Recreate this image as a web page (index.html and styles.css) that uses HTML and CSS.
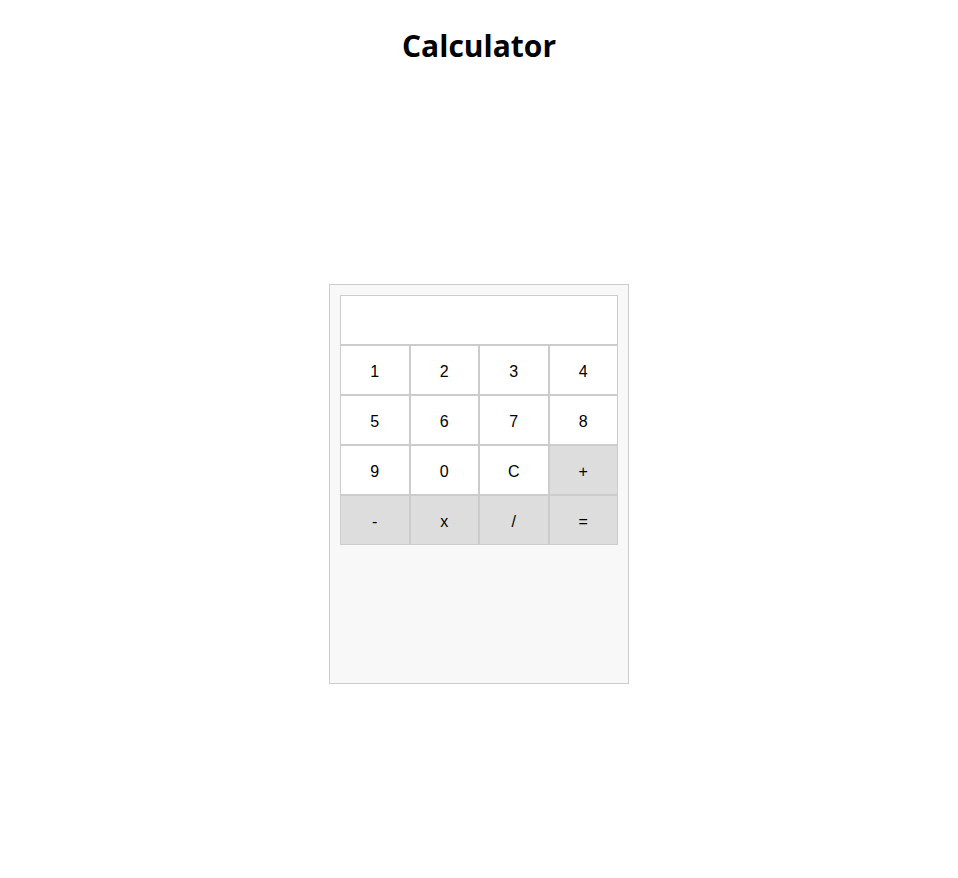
FILE: index.html
```html
<!DOCTYPE html>
<html>
<head>
<meta charset="utf-8">
<title>Calculator</title>
<link rel="stylesheet" href="styles.css">
</head>
<body>
<h1 class="title">Calculator</h1>
<div class="calculator">
  <input class="display" type="text" readonly>
  <div class="keys">
    <button class="key">1</button>
    <button class="key">2</button>
    <button class="key">3</button>
    <button class="key">4</button>
    <button class="key">5</button>
    <button class="key">6</button>
    <button class="key">7</button>
    <button class="key">8</button>
    <button class="key">9</button>
    <button class="key">0</button>
    <button class="key">C</button>
    <button class="key op">+</button>
    <button class="key op">-</button>
    <button class="key op">x</button>
    <button class="key op">/</button>
    <button class="key op">=</button>
  </div>
</div>
</body>
</html>
```
FILE: styles.css
```css
html, body {
  margin: 0;
  padding: 0;
  background: #fff;
}
body {
  padding: 8px;
  font-family: "Open Sans", "Noto Sans", sans-serif;
}
.title {
  text-align: center;
  font-size: 30px;
  font-weight: 700;
  margin: 14px 0 0;
  line-height: 48px;
  color: #000;
}
.calculator {
  box-sizing: border-box;
  width: 300px;
  height: 400px;
  margin: 214px auto 0;
  padding: 10px;
  background: #f8f8f8;
  border: 1px solid #ccc;
}
.display {
  display: block;
  box-sizing: border-box;
  width: 100%;
  height: 50px;
  margin: 0;
  border: 1px solid #ccc;
  background: #fff;
  font-family: "Liberation Sans", Arial, sans-serif;
  font-size: 16px;
  padding: 0 8px;
  outline: none;
}
.keys {
  display: grid;
  grid-template-columns: repeat(4, 1fr);
}
.key {
  box-sizing: border-box;
  height: 50px;
  margin: 0;
  padding: 4px 0 0;
  border: 1px solid #ccc;
  background: #fff;
  color: #000;
  font-family: "Liberation Sans", Arial, sans-serif;
  font-size: 16px;
}
.key.op {
  background: #ddd;
}
```
